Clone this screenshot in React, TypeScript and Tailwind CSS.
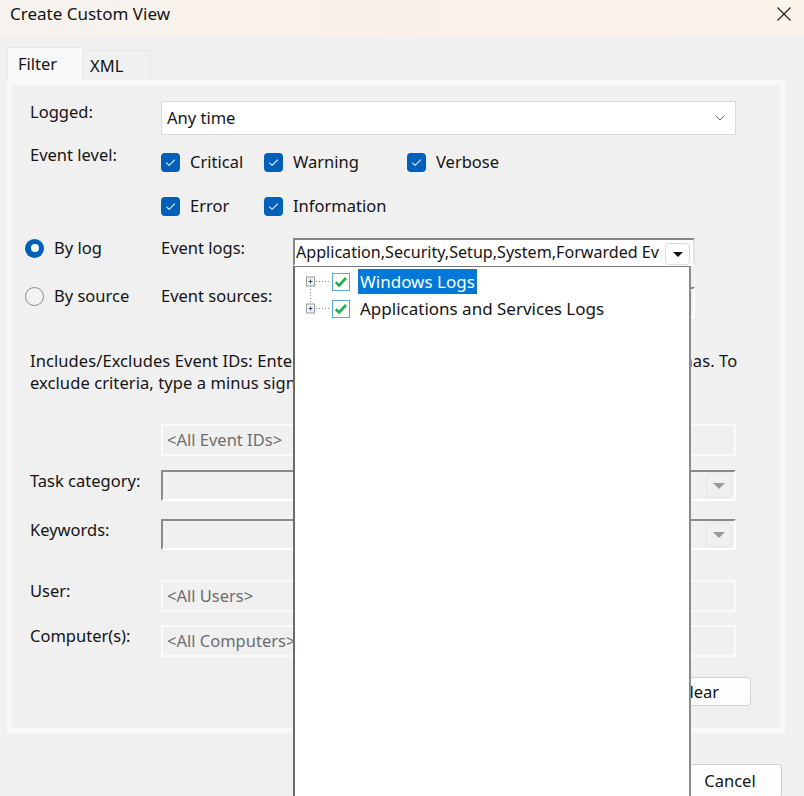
import React from "react";

type CheckProps = { label: string };

function LevelCheck({ label }: CheckProps) {
    return (
        <div className="flex h-[22px] items-center gap-[10px]">
            <span className="flex size-[19px] items-center justify-center rounded-[4px] bg-[#005fb8]">
                <svg viewBox="0 0 19 19" className="size-[19px]">
                    <path d="M5.5 9.8l2.6 2.6 5.4-5.4" fill="none" stroke="#cfe0f3" strokeWidth="1.2" strokeLinecap="round" strokeLinejoin="round" />
                </svg>
            </span>
            <span>{label}</span>
        </div>
    );
}

function Radio({ checked, label }: { checked?: boolean; label: string }) {
    return (
        <div className="flex h-[22px] w-[136px] items-center gap-[10px]">
            {checked ? (
                <span className="flex size-[19px] items-center justify-center rounded-full bg-[#005fb8]">
                    <span className="size-[8px] rounded-full bg-white" />
                </span>
            ) : (
                <span className="size-[19px] rounded-full border border-[#8b8b8b] bg-[#f3f3f3]" />
            )}
            <span>{label}</span>
        </div>
    );
}

function DisabledField({ text, className = "" }: { text?: string; className?: string }) {
    return (
        <div className={`flex h-[32px] w-[575px] items-center border-2 border-[#fafafa] bg-[#f0f0f0] pl-[4px] text-[#6d6d6d] ${className}`}>
            {text}
        </div>
    );
}

function DisabledCombo() {
    return (
        <div className="flex h-[31px] w-[575px] items-center justify-end border-2 border-t-[#8a8a8a] border-l-[#8a8a8a] border-r-white border-b-white bg-[#f0f0f0] pr-[3px]">
            <span className="flex h-[25px] w-[25px] items-center justify-center rounded-[4px] border border-[#e6e6e6] bg-[#f0f0f0]">
                <svg viewBox="0 0 12 6" className="h-[6px] w-[12px]">
                    <path d="M0 0h12L6 6z" fill="#9a9a9a" />
                </svg>
            </span>
        </div>
    );
}

function Row({ label, children, className = "" }: { label?: string; children: React.ReactNode; className?: string }) {
    return (
        <div className={`flex items-start pl-[18px] ${className}`}>
            <div className="w-[131px] leading-[22px]">{label}</div>
            {children}
        </div>
    );
}

function TreeGlyph({ first }: { first?: boolean }) {
    return (
        <svg viewBox="0 0 24 27" className="h-[27px] w-[24px]">
            {first ? (
                <line x1="4.5" y1="18" x2="4.5" y2="27" stroke="#8a8a8a" strokeWidth="1" strokeDasharray="1 2" />
            ) : (
                <line x1="4.5" y1="0" x2="4.5" y2="9" stroke="#8a8a8a" strokeWidth="1" strokeDasharray="1 2" />
            )}
            <line x1="10" y1="13.5" x2="23" y2="13.5" stroke="#8a8a8a" strokeWidth="1" strokeDasharray="1 2" />
            <rect x="0.5" y="9" width="8" height="9" fill="#f4f4f4" stroke="#9a9a9a" strokeWidth="1" />
            <path d="M2.5 13.5h4M4.5 11.5v4" stroke="#2f4f80" strokeWidth="1" />
        </svg>
    );
}

function TreeCheck() {
    return (
        <span className="flex size-[18px] items-center justify-center border border-[#58a6dc] bg-white">
            <svg viewBox="0 0 16 16" className="size-[16px]">
                <path d="M2.8 8.2l3.2 3.3L13 4" fill="none" stroke="#1db34a" strokeWidth="2.6" strokeLinejoin="round" />
            </svg>
        </span>
    );
}

export default function App() {
    return (
        <div className="relative h-[796px] w-[804px] overflow-hidden bg-[#f0f0f0] font-['Noto_Sans',sans-serif] text-[16.5px] text-[#141414]">
            {/* title bar */}
            <div className="flex h-[36px] items-start justify-between bg-gradient-to-r from-[#f6f2ee] via-[#f9f1e7] to-[#faf3ea] pl-[10px] pr-[12px] pt-[3px]">
                <span className="text-[17px] leading-[22px]">Create Custom View</span>
                <svg viewBox="0 0 16 16" className="mt-[3px] h-[16px] w-[16px]">
                    <path d="M1.5 1.5l13 13M14.5 1.5l-13 13" stroke="#1a1a1a" strokeWidth="1.1" />
                </svg>
            </div>

            {/* tabs */}
            <div className="ml-[7px] mt-[11px] flex h-[33px] items-end">
                <div className="flex h-[33px] w-[76px] items-start border border-b-0 border-[#e8e8e8] bg-[#f9f9f9] pl-[10px] pt-[5px] leading-[22px]">Filter</div>
                <div className="flex h-[30px] w-[68px] items-start border border-b-0 border-l-0 border-[#e6e6e6] bg-[#f0f0f0] pl-[7px] pt-[4px] leading-[22px]">XML</div>
            </div>

            {/* tab page */}
            <div className="ml-[7px] h-[653px] w-[778px] border-[5px] border-[#f8f8f8] bg-[#f0f0f0]">
                <Row label="Logged:" className="mt-[16px]">
                    <div className="flex h-[34px] w-[575px] items-center justify-between border border-[#dadada] bg-white pl-[5px] pr-[10px]">
                        <span>Any time</span>
                        <svg viewBox="0 0 10 6" className="h-[6px] w-[10px]">
                            <path d="M0.5 0.5l4.5 4.5 4.5-4.5" fill="none" stroke="#6a6a6a" strokeWidth="1" />
                        </svg>
                    </div>
                </Row>

                <Row label="Event level:" className="mt-[9px]">
                    <div className="grid grid-cols-[103px_143px_auto] gap-y-[22px] pt-[7px]">
                        <LevelCheck label="Critical" />
                        <LevelCheck label="Warning" />
                        <LevelCheck label="Verbose" />
                        <LevelCheck label="Error" />
                        <LevelCheck label="Information" />
                    </div>
                </Row>

                <div className="mt-[21px] flex items-start pl-[13px]">
                    <div className="-mt-[1px] flex">
                        <Radio checked label="By log" />
                        <div className="w-[132px] leading-[22px]">Event logs:</div>
                    </div>
                    <div className="flex h-[28px] w-[402px] items-start justify-between border-2 border-t-[#858585] border-l-[#858585] border-r-[#e4e4e4] border-b-white bg-white pl-[1px] pr-[3px]">
                        <span className="overflow-hidden whitespace-nowrap text-[16.1px] leading-[25px]">Application,Security,Setup,System,Forwarded Ev</span>
                        <span className="ml-[2px] mt-[3px] flex h-[22px] w-[25px] shrink-0 items-center justify-center rounded-[4px] border border-[#dcdcdc] bg-white">
                            <svg viewBox="0 0 10 5" className="h-[5px] w-[10px]">
                                <path d="M0 0h10L5 5z" fill="#111" />
                            </svg>
                        </span>
                    </div>
                </div>

                <div className="mt-[21px] flex items-start pl-[13px]">
                    <div className="-mt-[2px] flex">
                        <Radio label="By source" />
                        <div className="w-[132px] leading-[22px]">Event sources:</div>
                    </div>
                    <div className="h-[31px] w-[402px] border-2 border-t-[#858585] border-l-[#858585] border-r-white border-b-white bg-[#f0f0f0]" />
                </div>

                <p className="ml-[18px] mt-[32px] w-[712px] whitespace-nowrap leading-[22px] tracking-[0.08px]">
                    Includes/Excludes Event IDs: Enter ID numbers and/or ID ranges separated by commas. To
                    <br />
                    exclude criteria, type a minus sign first. For example 1,3,5-99,-76
                </p>

                <Row className="mt-[30px]">
                    <DisabledField text="<All Event IDs>" />
                </Row>
                <Row label="Task category:" className="mt-[14px]">
                    <DisabledCombo />
                </Row>
                <Row label="Keywords:" className="mt-[18px]">
                    <DisabledCombo />
                </Row>
                <Row label="User:" className="mt-[30px]">
                    <DisabledField text="<All Users>" className="h-[31px]" />
                </Row>
                <Row label="Computer(s):" className="mt-[13px]">
                    <DisabledField text="<All Computers>" />
                </Row>

                <div className="mt-[20px] flex justify-end pr-[29px]">
                    <button className="h-[29px] w-[104px] rounded-[4px] border border-[#d0d0d0] bg-[#fdfdfd] leading-[22px]">Clear</button>
                </div>
            </div>

            {/* dialog buttons */}
            <div className="mt-[31px] flex justify-end gap-[8px] pr-[22px]">
                <button className="h-[34px] w-[104px] rounded-[4px] border border-[#d0d0d0] bg-[#fdfdfd] leading-[22px]">OK</button>
                <button className="h-[34px] w-[104px] rounded-[4px] border border-[#d0d0d0] bg-[#fdfdfd] leading-[22px]">Cancel</button>
            </div>

            {/* open drop-down of Event logs */}
            <div className="absolute left-[293px] top-[266px] h-[540px] w-[398px] border-x-2 border-t border-l-[#6c6c6c] border-r-[#8c8c8c] border-t-[#7a7a7a] bg-white pl-[11px] pt-[1px] text-[17px]">
                <div className="flex h-[27px] items-center">
                    <TreeGlyph first />
                    <span className="ml-[2px]"><TreeCheck /></span>
                    <span className="ml-[8px] flex h-[25px] items-center border border-dotted border-[#8a5a2c] bg-[#0078d7] px-[1px] text-white">Windows Logs</span>
                </div>
                <div className="flex h-[27px] items-center">
                    <TreeGlyph />
                    <span className="ml-[2px]"><TreeCheck /></span>
                    <span className="ml-[10px]">Applications and Services Logs</span>
                </div>
            </div>
        </div>
    );
}
